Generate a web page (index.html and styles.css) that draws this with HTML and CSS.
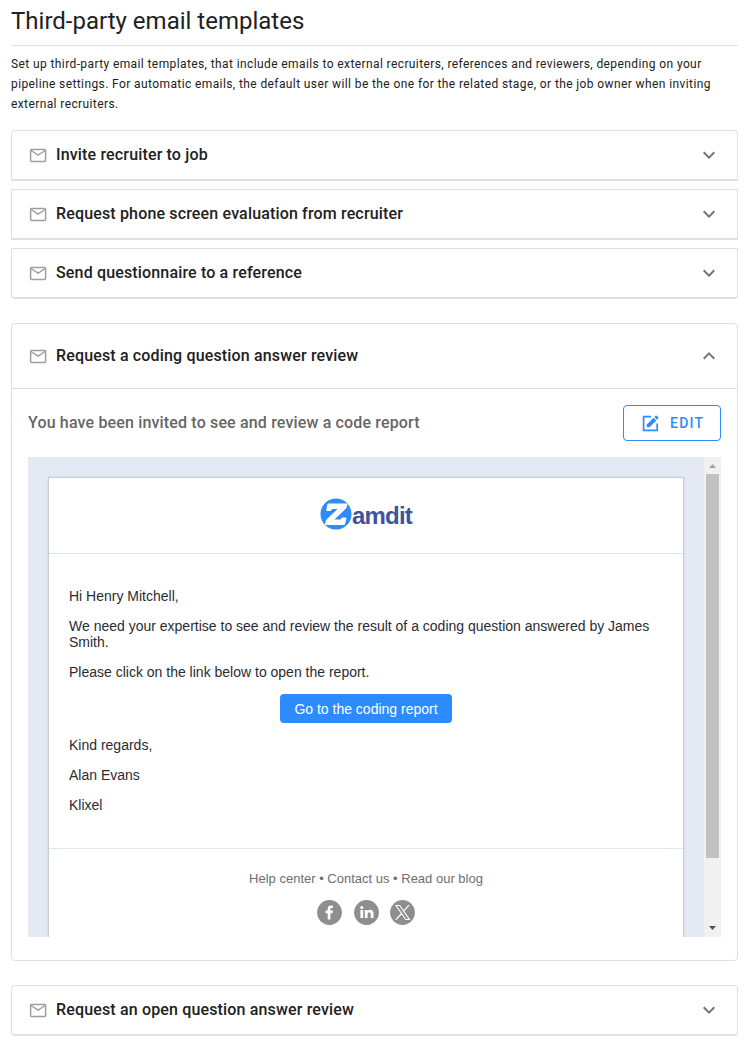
FILE: index.html
```html
<!DOCTYPE html>
<html lang="en">
<head>
<meta charset="utf-8">
<title>Third-party email templates</title>
<link rel="stylesheet" href="styles.css">
</head>
<body>
<svg width="0" height="0" class="defs">
  <symbol id="mail" viewBox="0 0 20 20"><rect x="2.600" y="3.600" width="15" height="11.800" rx=".8" fill="none" stroke="currentColor" stroke-width="1.500"/><path d="M3 4.500l7.100 4.700 7.100-4.700" fill="none" stroke="currentColor" stroke-width="1.400"/></symbol>
  <symbol id="down" viewBox="0 0 24 24"><path fill="currentColor" d="M7.410 8.580L12 13.170l4.590-4.590L18 10l-6 6l-6-6z"/></symbol>
</svg>
<main class="page">
  <h1 class="title">Third-party email templates</h1>
  <p class="intro">Set up third-party email templates, that include emails to external recruiters, references and reviewers, depending on your<br>pipeline settings. For automatic emails, the default user will be the one for the related stage, or the job owner when inviting<br>external recruiters.</p>

  <div class="group">
    <section class="panel panel-first"><div class="head"><svg class="mail"><use href="#mail"/></svg><h2 class="name">Invite recruiter to job</h2><svg class="chevron"><use href="#down"/></svg></div></section>
    <section class="panel panel-middle"><div class="head"><svg class="mail"><use href="#mail"/></svg><h2 class="name">Request phone screen evaluation from recruiter</h2><svg class="chevron"><use href="#down"/></svg></div></section>
    <section class="panel panel-last"><div class="head"><svg class="mail"><use href="#mail"/></svg><h2 class="name">Send questionnaire to a reference</h2><svg class="chevron"><use href="#down"/></svg></div></section>
  </div>

  <section class="panel panel-open">
    <div class="head head-open"><svg class="mail"><use href="#mail"/></svg><h2 class="name">Request a coding question answer review</h2><svg class="chevron chevron-up"><use href="#down"/></svg></div>
    <div class="body">
      <div class="subject-row">
        <h3 class="subject">You have been invited to see and review a code report</h3>
        <button class="edit" type="button">
          <svg class="edit-icon" viewBox="0 0 16 16"><path d="M8.500 1.500H1.500V14.500H14.300V8" fill="none" stroke="currentColor" stroke-width="1.600"/><path fill="currentColor" d="M4.500 9L10.900 2.600l2.500 2.500-6.400 6.400H4.500zM11.600 1.900l1.200-1.200q.5-.4 1 0l1.500 1.500q.4.500 0 1l-1.200 1.200z"/></svg>
          <span>EDIT</span>
        </button>
      </div>
      <div class="preview">
        <div class="canvas">
          <article class="mail-card">
            <header class="brand">
              <svg class="brand-mark" viewBox="0 0 32 32"><circle cx="16" cy="16" r="15.500" fill="#2c8cfb"/><path fill="#fff" stroke="#fff" stroke-linejoin="round" d="M8 6H27L26 10L13.500 22H20.500L22 20H26L24.500 26.500H5.500L6.500 22L18.500 10.500H12L10.500 12.500H6.700Z"/></svg>
              <span class="brand-name">amdit</span>
            </header>
            <div class="message">
              <p>Hi Henry Mitchell,</p>
              <p>We need your expertise to see and review the result of a coding question answered by James<br>Smith.</p>
              <p>Please click on the link below to open the report.</p>
              <a class="cta">Go to the coding report</a>
              <p>Kind regards,</p>
              <p>Alan Evans</p>
              <p>Klixel</p>
            </div>
            <footer class="foot">
              <div class="links">Help center • Contact us • Read our blog</div>
              <div class="social">
                <svg viewBox="0 0 25 25"><circle cx="12.500" cy="12.500" r="12.400" fill="#8e8e8e"/><path fill="#fff" d="M10.700 19.500v-6.200H8.600v-2.700h2.100V8.700q0-3.200 3.200-3.200h2v2.600h-1.400q-1.100 0-1.100 1.100v1.400h2.600l-.4 2.700h-2.200v6.200z"/></svg>
                <svg viewBox="0 0 25 25"><circle cx="12.500" cy="12.500" r="12.400" fill="#8e8e8e"/><circle cx="7.800" cy="7.500" r="1.600" fill="#fff"/><path fill="#fff" d="M6.400 10h2.800V18H6.400zM10.800 10h2.700v1.100q.9-1.300 2.700-1.300 3.300 0 3.300 3.800V18h-2.800v-4q0-1.700-1.400-1.700-1.700 0-1.700 1.900V18h-2.800z"/></svg>
                <svg viewBox="0 0 25 25"><circle cx="12.500" cy="12.500" r="12.400" fill="#8e8e8e"/><path fill="none" stroke="#fff" stroke-width="1.100" d="M6 5.500h3.700L19.500 19.500h-3.700zM19 5.200l-5.800 6.500M11.600 13.500L5.700 19.800"/></svg>
              </div>
            </footer>
          </article>
        </div>
        <div class="scrollbar">
          <svg class="arrow" viewBox="0 0 17 17"><path d="M5 11h7L8.500 7z" fill="#a3a3a3"/></svg>
          <div class="thumb"></div>
          <svg class="arrow" viewBox="0 0 17 17"><path d="M5 6h7l-3.500 4z" fill="#505050"/></svg>
        </div>
      </div>
    </div>
  </section>

  <section class="panel"><div class="head"><svg class="mail"><use href="#mail"/></svg><h2 class="name">Request an open question answer review</h2><svg class="chevron"><use href="#down"/></svg></div></section>
</main>
</body>
</html>
```
FILE: styles.css
```css
* { box-sizing: border-box; }
body { margin: 0; background: #fff; color: #212121; font-family: Roboto, sans-serif; }
h1, h2, h3, p { margin: 0; font-weight: 400; }
.defs { display: none; }
.page { padding: 0 12px 0 11px; }
.title { height: 46px; padding-top: 5px; border-bottom: 1px solid #e0e0e0; font-size: 24px; line-height: 32px; }
.intro { padding-top: 8px; height: 84px; font-size: 12px; line-height: 20px; letter-spacing: .396px; white-space: nowrap; }
.group { display: flex; flex-direction: column; gap: 8px; }
.panel { border: 1px solid #e0e0e0; border-bottom-width: 2px; border-radius: 4px; }
.panel-first { border-radius: 4px 4px 0 0; }
.panel-middle { border-radius: 0; }
.panel-last { border-radius: 0 0 4px 4px; }
.panel-open { margin: 24px 0; height: 638px; border-bottom-width: 1px; }
.head { display: flex; align-items: center; height: 48px; padding: 0 16px; }
.head-open { height: 65px; border-bottom: 1px solid #e0e0e0; }
.mail { width: 20px; height: 20px; margin: 2px 8px 0 0; color: #9e9e9e; }
.name { flex: 1; font-size: 16px; line-height: 24px; font-weight: 500; letter-spacing: .156px; }
.chevron { width: 24px; height: 24px; color: #757575; }
.chevron-up { transform: rotate(180deg); }
.body { padding: 16px; }
.subject-row { display: flex; justify-content: space-between; height: 52px; }
.subject { padding-top: 6px; font-size: 16px; line-height: 24px; font-weight: 500; letter-spacing: .156px; color: #666; }
.edit { display: flex; align-items: center; gap: 11px; width: 98px; height: 36px; padding: 0 0 0 18px; border: 1px solid #2c8cff; border-radius: 4px; background: #fff; color: #2c8cff; font: 500 14px Roboto, sans-serif; letter-spacing: 1.250px; }
.edit-icon { width: 17px; height: 17px; }
.preview { display: flex; height: 480px; overflow: hidden; font-family: "Liberation Sans", Arial, sans-serif; }
.canvas { flex: 1; padding: 20px 20px 0; background: #e5e9f3; }
.mail-card { height: 520px; border: 1px solid #c5cfd6; background: #fff; box-shadow: 0 0 2px #c5cfd6; }
.brand { display: flex; justify-content: center; height: 76px; padding-top: 20px; border-bottom: 1px solid #dfe7eb; }
.brand-mark { width: 32px; height: 32px; }
.brand-name { color: #41529c; font-size: 24px; line-height: 36px; font-weight: 700; letter-spacing: -.8px; }
.message { display: flex; flex-direction: column; gap: 14px; height: 295px; padding: 34px 20px 0; border-bottom: 1px solid #dfe7eb; color: #2b2b33; font-size: 14px; line-height: 16px; white-space: nowrap; }
.cta { align-self: center; width: 172px; height: 29px; border-radius: 4px; background: #2c8cff; color: #fff; line-height: 30px; text-align: center; }
.foot { padding-top: 22px; color: #6e6e6e; font-size: 13px; line-height: 16px; text-align: center; }
.social { display: flex; justify-content: center; gap: 11.500px; margin-top: 13px; }
.social svg { width: 25px; height: 25px; }
.scrollbar { display: flex; flex-direction: column; width: 17px; background: #f1f1f1; }
.arrow { width: 17px; height: 17px; }
.thumb { width: 13px; height: 384px; margin: 0 2px 62px; background: #c1c1c1; }
```
